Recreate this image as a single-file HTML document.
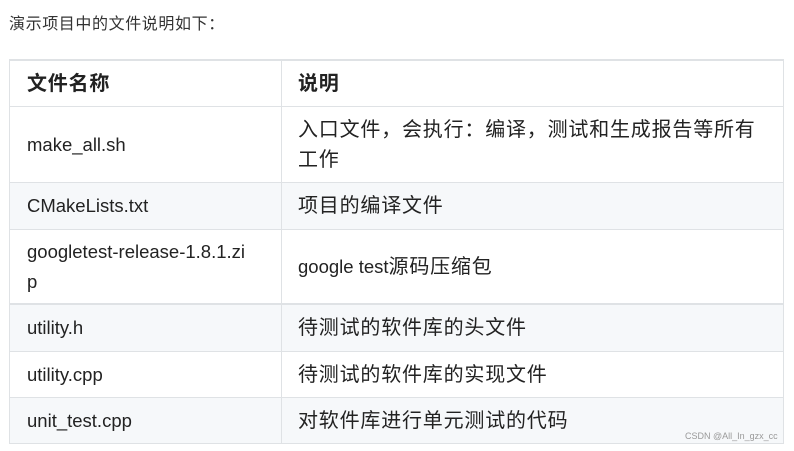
<!DOCTYPE html>
<html><head><meta charset="utf-8"><style>
body{margin:0;width:794px;height:451px;background:#fff;position:relative;overflow:hidden;font-family:"Liberation Sans","Noto Sans CJK SC",sans-serif;color:#222}
.t{position:absolute;left:9px;top:10px;font-size:16px;letter-spacing:0.6px;color:#333}
.r{position:absolute;left:9px;width:775px;border-left:1px solid #dfe2e5;border-right:1px solid #dfe2e5;border-bottom:1px solid #dfe2e5;box-sizing:border-box}
.c{position:absolute;top:0;bottom:0;display:flex;align-items:center;font-size:18.5px;line-height:30px}
.a{left:17px;width:250px}
.b{left:288px;width:475px;font-size:20px;letter-spacing:0.8px}
.b span{letter-spacing:0;font-size:18.5px}
.d{position:absolute;left:271px;top:0;bottom:0;border-left:1px solid #dfe2e5}
.g{background:#f6f8fa}
</style></head><body>
<div class="t">演示项目中的文件说明如下：</div>
<div class="r" style="top:59px;height:48px;border-top:2px solid #dfe2e5"><div class="d"></div><div class="c a" style="font-weight:bold;font-size:20px;letter-spacing:0.8px">文件名称</div><div class="c b" style="font-weight:bold">说明</div></div>
<div class="r" style="top:107px;height:76px"><div class="d"></div><div class="c a">make_all.sh</div><div class="c b">入口文件，会执行：编译，测试和生成报告等所有工作</div></div>
<div class="r g" style="top:183px;height:47px"><div class="d"></div><div class="c a">CMakeLists.txt</div><div class="c b">项目的编译文件</div></div>
<div class="r" style="top:230px;height:75px;border-bottom:2px solid #dfe2e5"><div class="d"></div><div class="c a">googletest-release-1.8.1.zi<br>p</div><div class="c b"><span>google test</span>源码压缩包</div></div>
<div class="r g" style="top:305px;height:47px"><div class="d"></div><div class="c a">utility.h</div><div class="c b">待测试的软件库的头文件</div></div>
<div class="r" style="top:352px;height:46px"><div class="d"></div><div class="c a">utility.cpp</div><div class="c b">待测试的软件库的实现文件</div></div>
<div class="r g" style="top:398px;height:46px"><div class="d"></div><div class="c a">unit_test.cpp</div><div class="c b">对软件库进行单元测试的代码</div></div>
<div style="position:absolute;left:685px;top:431px;font-size:9px;color:#999">CSDN @All_In_gzx_cc</div>
</body></html>
